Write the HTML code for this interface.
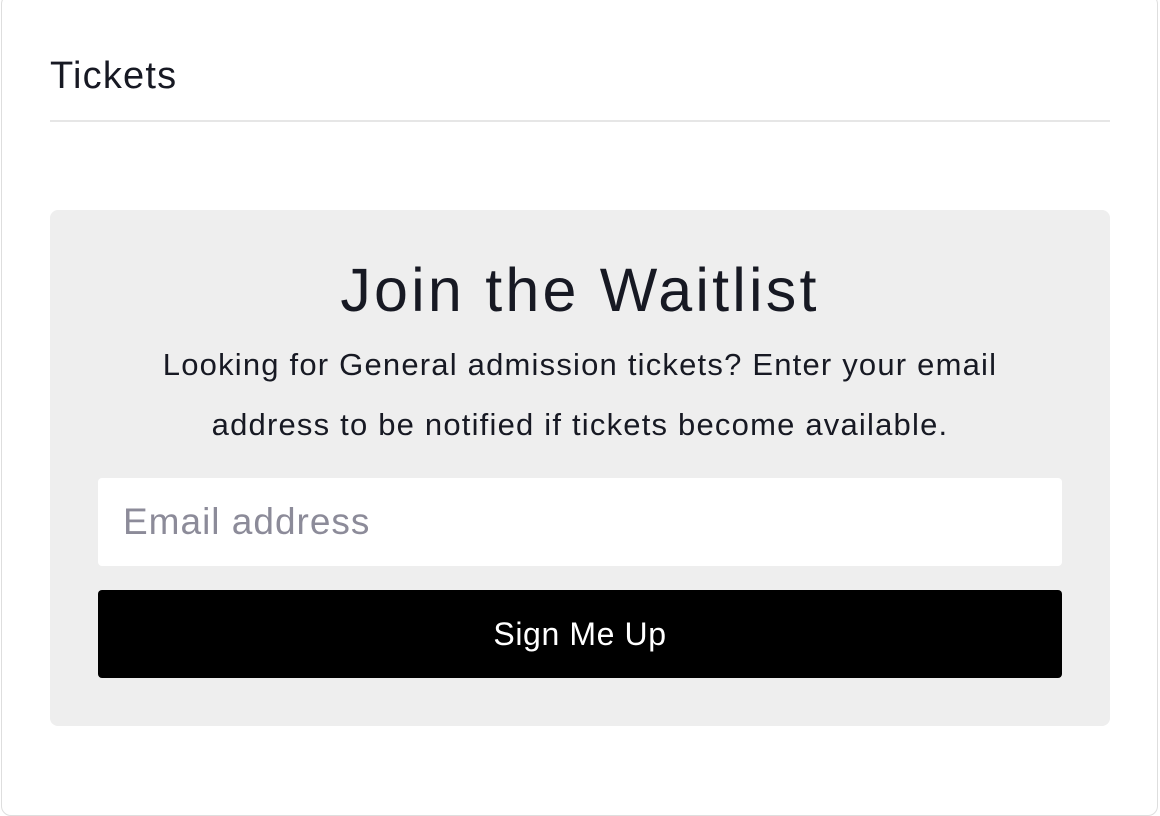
<!DOCTYPE html>
<html><head><style>
html,body{margin:0;padding:0;background:#fff;}
body{width:1160px;height:816px;position:relative;font-family:"Liberation Sans",sans-serif;overflow:hidden;}
.card{position:absolute;left:1px;top:-6px;width:1157px;height:822px;border:1px solid #dedede;border-radius:10px;box-sizing:border-box;}
.t{position:absolute;left:50px;top:55px;font-size:38px;color:#171923;letter-spacing:1.2px;}
.hr{position:absolute;left:50px;top:120px;width:1060px;height:2px;background:#e6e6e6;}
.box{position:absolute;left:50px;top:210px;width:1060px;height:516px;background:#eeeeee;border-radius:8px;}
h1{position:absolute;left:0;top:254px;width:1160px;margin:0;text-align:center;font-weight:normal;font-size:61px;letter-spacing:3.2px;color:#171923;line-height:72px;}
p{position:absolute;left:0;top:335px;width:1160px;margin:0;text-align:center;font-size:31px;line-height:60px;color:#171923;letter-spacing:1.2px;}
.in{position:absolute;left:98px;top:478px;width:964px;height:88px;background:#fff;border-radius:4px;}
.in span{position:absolute;left:25px;top:23px;font-size:37px;color:#8c8b99;letter-spacing:1px;}
.btn{position:absolute;left:98px;top:590px;width:964px;height:88px;background:#000;border-radius:4px;color:#fff;font-size:32px;text-align:center;line-height:88px;letter-spacing:0.6px;}
</style></head><body>
<div class="card"></div>
<div class="t">Tickets</div>
<div class="hr"></div>
<div class="box"></div>
<h1>Join the Waitlist</h1>
<p>Looking for General admission tickets? Enter your email<br>address to be notified if tickets become available.</p>
<div class="in"><span>Email address</span></div>
<div class="btn">Sign Me Up</div>
</body></html>
